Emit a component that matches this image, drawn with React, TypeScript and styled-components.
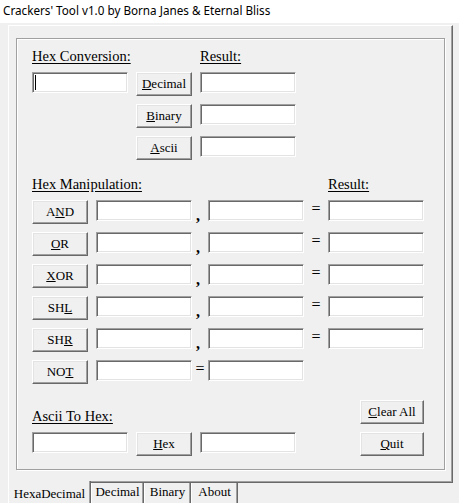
import styled, { createGlobalStyle } from 'styled-components';

const GlobalStyle = createGlobalStyle`
  html, body {
    margin: 0;
    padding: 0;
  }
  body {
    width: 459px;
    height: 503px;
    overflow: hidden;
    background: #f0f0f0;
    color: #000;
    font-family: 'Liberation Serif', 'Times New Roman', serif;
  }
`;

const Window = styled.div`
  width: 459px;
  height: 503px;
  display: flex;
  flex-direction: column;
  background: #f0f0f0;
  overflow: hidden;
`;

const TitleBar = styled.div`
  height: 23px;
  flex: none;
  background: #fff;
  padding-left: 3px;
  font-family: 'Noto Sans', 'DejaVu Sans', sans-serif;
  font-size: 11.7px;
  line-height: 21px;
  white-space: nowrap;
`;

const Body = styled.div`
  flex: 1;
  padding: 2px 6px 0 8px;
  display: flex;
  flex-direction: column;
`;

const Panel = styled.div`
  box-sizing: border-box;
  width: 445px;
  height: 458px;
  flex: none;
  border-top: 1px solid #fff;
  border-left: 1px solid #fff;
  border-right: 1px solid #696969;
  border-bottom: 1px solid #696969;
  box-shadow: inset -1px -1px 0 #a0a0a0;
  padding: 12px 0 0 7px;
`;

const GroupBox = styled.div`
  box-sizing: border-box;
  width: 429px;
  height: 432px;
  border: 1px solid #a0a0a0;
  box-shadow: inset 1px 1px 0 #fff, 1px 1px 0 #fff;
  padding: 9px 0 0 15px;
  display: flex;
  flex-direction: column;
  gap: 16px;
`;

const ConvGrid = styled.div`
  display: grid;
  grid-template-columns: 96px 56px 96px;
  column-gap: 8px;
  row-gap: 8px;
`;

const ManipGrid = styled.div`
  display: grid;
  grid-template-columns: 64px 96px 16px 96px 24px 96px;
  row-gap: 8px;
`;

const AsciiGrid = styled.div`
  width: 392px;
  display: grid;
  grid-template-columns: 96px 56px 96px 1fr 64px;
  column-gap: 8px;
  row-gap: 8px;
`;

const Label = styled.div<{ $col?: string }>`
  grid-column: ${p => p.$col ?? 'auto'};
  align-self: end;
  font-size: 14.5px;
  line-height: 16px;
  height: 16px;
  text-decoration: underline;
  text-underline-offset: 2px;
  white-space: nowrap;
`;

const Field = styled.div<{ $col?: string }>`
  grid-column: ${p => p.$col ?? 'auto'};
  box-sizing: border-box;
  width: 96px;
  height: 21px;
  align-self: start;
  background: #fff;
  border-top: 1px solid #a0a0a0;
  border-left: 1px solid #a0a0a0;
  border-right: 1px solid #fff;
  border-bottom: 1px solid #fff;
  box-shadow: inset 1px 1px 0 #696969, inset -1px -1px 0 #e3e3e3;
  position: relative;
`;

const Caret = styled.span`
  position: absolute;
  left: 2px;
  top: 2px;
  width: 1px;
  height: 15px;
  background: #000;
`;

const Button = styled.button<{ $col?: string; $w?: number }>`
  grid-column: ${p => p.$col ?? 'auto'};
  box-sizing: border-box;
  width: ${p => p.$w ?? 56}px;
  height: 24px;
  padding: 0;
  margin: 0;
  background: #f0f0f0;
  border-top: 1px solid #fff;
  border-left: 1px solid #fff;
  border-right: 1px solid #696969;
  border-bottom: 1px solid #696969;
  box-shadow: inset -1px -1px 0 #a0a0a0, inset 1px 1px 0 #e3e3e3;
  font-family: 'Liberation Serif', 'Times New Roman', serif;
  font-size: 13px;
  color: #000;
  white-space: nowrap;
  u {
    text-underline-offset: 1px;
  }
`;

const Sep = styled.div<{ $kind: 'comma' | 'equals' }>`
  height: ${p => (p.$kind === 'comma' ? 24 : 21)}px;
  display: flex;
  justify-content: ${p => (p.$kind === 'comma' ? 'flex-start' : 'center')};
  align-items: ${p => (p.$kind === 'comma' ? 'flex-end' : 'center')};
  padding-left: ${p => (p.$kind === 'comma' ? 4 : 0)}px;
  font-size: 16px;
  line-height: 16px;
  font-weight: ${p => (p.$kind === 'comma' ? 700 : 400)};
  span {
    display: block;
    margin-top: ${p => (p.$kind === 'equals' ? -3 : 0)}px;
  }
`;

const TabStrip = styled.div`
  display: flex;
  height: 20px;
`;

const Tab = styled.div<{ $active?: boolean; $w: number }>`
  box-sizing: border-box;
  width: ${p => p.$w}px;
  height: ${p => (p.$active ? 24 : 22)}px;
  margin-top: ${p => (p.$active ? -2 : 0)}px;
  position: relative;
  background: #f0f0f0;
  border-left: 1px solid #fff;
  border-right: 1px solid #696969;
  box-shadow: inset -1px 0 0 #a0a0a0;
  text-align: center;
  font-size: 13px;
  line-height: 16px;
  padding-top: ${p => (p.$active ? 5 : 1)}px;
  white-space: nowrap;
`;

const manipRows = [
  { label: 'AND', pre: 'A', key: 'N', post: 'D' },
  { label: 'OR', pre: '', key: 'O', post: 'R' },
  { label: 'XOR', pre: '', key: 'X', post: 'OR' },
  { label: 'SHL', pre: 'SH', key: 'L', post: '' },
  { label: 'SHR', pre: 'SH', key: 'R', post: '' },
];

export default function App() {
  return (
    <Window>
      <GlobalStyle />
      <TitleBar>Crackers' Tool v1.0 by Borna Janes &amp; Eternal Bliss</TitleBar>
      <Body>
        <Panel>
          <GroupBox>
            <ConvGrid>
              <Label $col="1 / 3">Hex Conversion:</Label>
              <Label $col="3">Result:</Label>

              <Field>
                <Caret />
              </Field>
              <Button>
                <u>D</u>ecimal
              </Button>
              <Field />

              <Button $col="2">
                <u>B</u>inary
              </Button>
              <Field />

              <Button $col="2">
                <u>A</u>scii
              </Button>
              <Field />
            </ConvGrid>

            <ManipGrid>
              <Label $col="1 / 6">Hex Manipulation:</Label>
              <Label $col="6">Result:</Label>

              {manipRows.map(r => (
                <ManipRow key={r.label} pre={r.pre} k={r.key} post={r.post} />
              ))}

              <Button>
                NO<u>T</u>
              </Button>
              <Field />
              <Sep $kind="equals">
                <span>=</span>
              </Sep>
              <Field />
            </ManipGrid>

            <AsciiGrid>
              <Label $col="1 / 4">Ascii To Hex:</Label>
              <Button $col="5" $w={64}>
                <u>C</u>lear All
              </Button>

              <Field />
              <Button>
                <u>H</u>ex
              </Button>
              <Field />
              <Button $col="5" $w={64}>
                <u>Q</u>uit
              </Button>
            </AsciiGrid>
          </GroupBox>
        </Panel>
        <TabStrip>
          <Tab $active $w={83}>
            HexaDecimal
          </Tab>
          <Tab $w={53}>Decimal</Tab>
          <Tab $w={47}>Binary</Tab>
          <Tab $w={47}>About</Tab>
        </TabStrip>
      </Body>
    </Window>
  );
}

function ManipRow({ pre, k, post }: { pre: string; k: string; post: string }) {
  return (
    <>
      <Button>
        {pre}
        <u>{k}</u>
        {post}
      </Button>
      <Field />
      <Sep $kind="comma">
        <span>,</span>
      </Sep>
      <Field />
      <Sep $kind="equals">
        <span>=</span>
      </Sep>
      <Field />
    </>
  );
}
